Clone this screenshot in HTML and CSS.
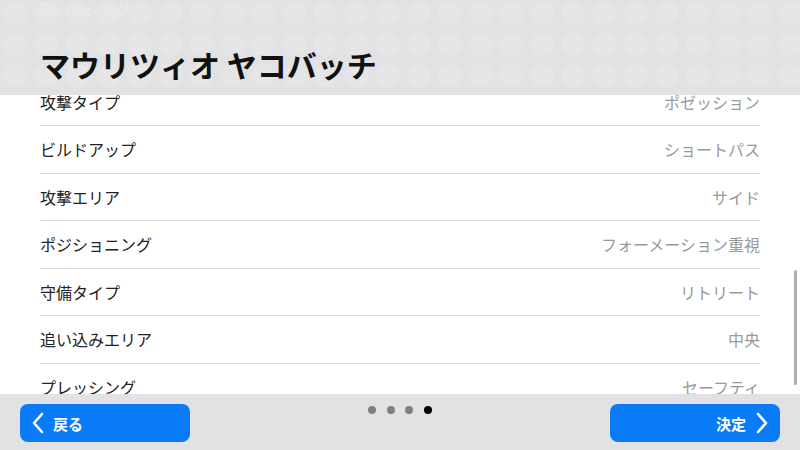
FILE: index.html
```html
<!DOCTYPE html>
<html lang="ja">
<head>
<meta charset="utf-8">
<link rel="stylesheet" href="styles.css">
</head>
<body>
<div class="screen">
  <header class="header">
    <div class="ghost">プレッシング</div>
    <h1 class="title">マウリツィオ ヤコバッチ</h1>
  </header>
  <main class="content">
    <ul class="list">
      <li class="row"><span class="label">攻撃タイプ</span><span class="value">ポゼッション</span></li>
      <li class="row"><span class="label">ビルドアップ</span><span class="value">ショートパス</span></li>
      <li class="row"><span class="label">攻撃エリア</span><span class="value">サイド</span></li>
      <li class="row"><span class="label">ポジショニング</span><span class="value">フォーメーション重視</span></li>
      <li class="row"><span class="label">守備タイプ</span><span class="value">リトリート</span></li>
      <li class="row"><span class="label">追い込みエリア</span><span class="value">中央</span></li>
      <li class="row"><span class="label">プレッシング</span><span class="value">セーフティ</span></li>
    </ul>
    <div class="scrollbar"></div>
  </main>
  <footer class="footer">
    <button class="btn btn-back">
      <svg class="chev" width="12" height="22" viewBox="0 0 12 22"><path d="M10 2 L2 11 L10 20" fill="none" stroke="#fff" stroke-width="2.6" stroke-linecap="round" stroke-linejoin="round"/></svg>
      <span>戻る</span>
    </button>
    <div class="dots">
      <span class="dot"></span><span class="dot"></span><span class="dot"></span><span class="dot active"></span>
    </div>
    <button class="btn btn-ok">
      <span>決定</span>
      <svg class="chev" width="12" height="22" viewBox="0 0 12 22"><path d="M2 2 L10 11 L2 20" fill="none" stroke="#fff" stroke-width="2.6" stroke-linecap="round" stroke-linejoin="round"/></svg>
    </button>
  </footer>
</div>
</body>
</html>
```
FILE: styles.css
```css
* { box-sizing: border-box; }
html, body {
  margin: 0;
  padding: 0;
  width: 800px;
  height: 450px;
  overflow: hidden;
  font-family: "Noto Sans CJK JP", "Noto Sans", sans-serif;
  background: #fff;
}
.screen {
  width: 800px;
  height: 450px;
  display: flex;
  flex-direction: column;
}
.header {
  height: 95px;
  flex: none;
  padding: 0 40px;
  background-color: #e2e2e4;
  background-image: radial-gradient(circle at 15.5px 15.5px, #e6e6e8 0, #e6e6e8 11px, rgba(230,230,232,0) 12.5px);
  background-size: 31px 31px;
  background-position: 0 -2px;
  position: relative;
  z-index: 2;
}
.ghost {
  font-size: 15px;
  line-height: 18px;
  color: #eaeaec;
}
.title {
  margin: 28px 0 0;
  font-size: 30px;
  line-height: 36px;
  font-weight: 700;
  color: #111;
  letter-spacing: 0;
}
.content {
  flex: 1;
  position: relative;
  overflow: hidden;
  background: #fff;
}
.list {
  list-style: none;
  margin: -16.5px 0 0;
  padding: 0 40px;
}
.row {
  height: 47.5px;
  display: flex;
  align-items: center;
  justify-content: space-between;
  border-bottom: 1px solid #dcdcdc;
  font-size: 16px;
}
.label { color: #222; }
.value { color: #999; font-size: 16px; }
.scrollbar {
  position: absolute;
  right: 3px;
  top: 175px;
  width: 3px;
  height: 115px;
  background: #b0b0b0;
  border-radius: 2px;
}
.footer {
  height: 56px;
  flex: none;
  background: #e2e2e4;
  padding: 10px 20px 8px;
  display: grid;
  grid-template-columns: 170px 1fr 170px;
  position: relative;
  z-index: 2;
}
.btn {
  height: 38px;
  border: none;
  border-radius: 8px;
  background: #0a7bf7;
  color: #fff;
  font-family: inherit;
  font-size: 15px;
  font-weight: 700;
  display: flex;
  align-items: center;
  padding: 0;
  gap: 9px;
}
.btn-back { padding-left: 12px; }
.btn-ok { justify-content: flex-end; padding-right: 12px; gap: 10px; }
.dots {
  display: flex;
  justify-content: center;
  gap: 10.5px;
  margin-top: 2px;
  align-self: start;
}
.dot {
  width: 8px;
  height: 8px;
  border-radius: 50%;
  background: #808080;
}
.dot.active { background: #000; }
```
